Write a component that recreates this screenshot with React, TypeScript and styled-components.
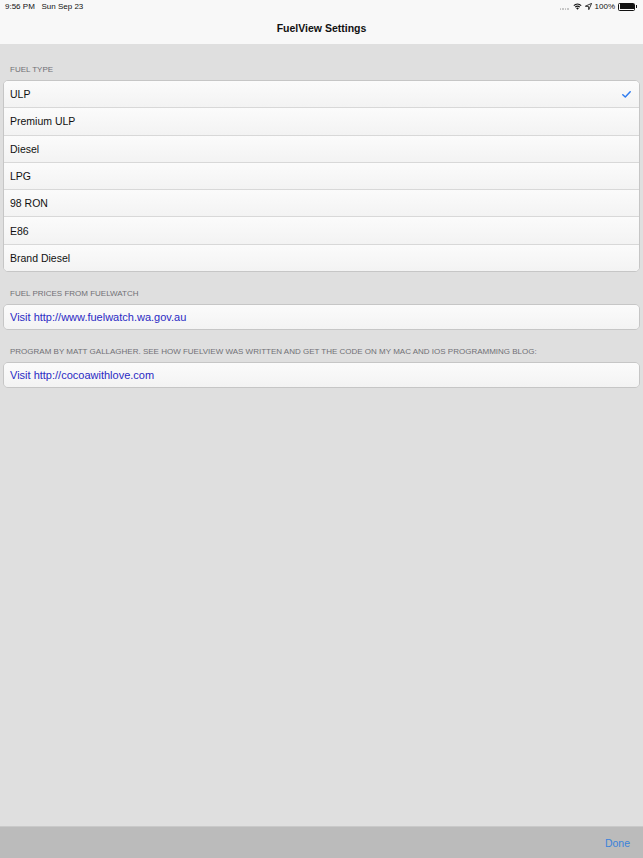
import React from "react";
import styled, { createGlobalStyle } from "styled-components";

const GlobalStyle = createGlobalStyle`
  html, body {
    margin: 0;
    padding: 0;
    background: #dfdfdf;
  }
  body {
    font-family: "Liberation Sans", Arial, sans-serif;
    -webkit-font-smoothing: antialiased;
  }
`;

const FUELS = ["ULP", "Premium ULP", "Diesel", "LPG", "98 RON", "E86", "Brand Diesel"];

const App: React.FC = () => {
  return (
    <>
      <GlobalStyle />
      <Screen>
        <Top>
          <StatusBar>
            <StatusText>9:56 PM&nbsp;&nbsp;&nbsp;Sun Sep 23</StatusText>
            <StatusRight>
              <Dots>
                {[0, 1, 2, 3].map((d) => (
                  <Dot key={d} />
                ))}
              </Dots>
              <svg width="9" height="7" viewBox="0 0 18 14">
                <path d="M9 13.5 L6.3 10.4 A4 4 0 0 1 11.7 10.4 Z" fill="#111" />
                <path d="M4.4 8.3 A7 7 0 0 1 13.6 8.3" stroke="#111" strokeWidth="2.2" fill="none" />
                <path d="M1.6 5.2 A11 11 0 0 1 16.4 5.2" stroke="#111" strokeWidth="2.2" fill="none" />
              </svg>
              <svg width="7" height="7" viewBox="0 0 10 10">
                <path d="M9.5 0.5 L0.5 4.6 L5 5 L5.4 9.5 Z" fill="none" stroke="#111" strokeWidth="1.2" strokeLinejoin="round" />
              </svg>
              <StatusText>100%</StatusText>
              <Battery>
                <BatteryFill />
              </Battery>
            </StatusRight>
          </StatusBar>
          <NavBar>
            <NavTitle>FuelView Settings</NavTitle>
          </NavBar>
        </Top>

        <Content>
          <SectionHeader $first>Fuel Type</SectionHeader>
          <Group>
            {FUELS.map((f, i) => (
              <Row key={f} $last={i === FUELS.length - 1}>
                <RowLabel>{f}</RowLabel>
                {i === 0 && (
                  <svg width="9" height="7" viewBox="0 0 9 7">
                    <path d="M0.8 3.8 L3.3 6 L8.2 0.8" stroke="#2f7cf0" strokeWidth="1.5" fill="none" strokeLinecap="round" strokeLinejoin="round" />
                  </svg>
                )}
              </Row>
            ))}
          </Group>

          <SectionHeader>Fuel prices from Fuelwatch</SectionHeader>
          <Group>
            <Row $last $single>
              <LinkLabel>Visit http://www.fuelwatch.wa.gov.au</LinkLabel>
            </Row>
          </Group>

          <SectionHeader>
            Program by Matt Gallagher. See how FuelView was written and get the code on my Mac and iOS programming blog:
          </SectionHeader>
          <Group>
            <Row $last $single>
              <LinkLabel>Visit http://cocoawithlove.com</LinkLabel>
            </Row>
          </Group>
        </Content>

        <Toolbar>
          <DoneButton>Done</DoneButton>
        </Toolbar>
      </Screen>
    </>
  );
};

export default App;

const Screen = styled.div`
  display: flex;
  flex-direction: column;
  height: 858px;
  width: 643px;
  background: #dfdfdf;
`;

const Top = styled.div`
  background: #f8f8f8;
  height: 44px;
  display: flex;
  flex-direction: column;
`;

const StatusBar = styled.div`
  height: 13px;
  display: flex;
  align-items: center;
  justify-content: space-between;
  padding: 0 6px 0 5px;
`;

const StatusText = styled.span`
  font-size: 8px;
  color: #111;
  white-space: pre;
`;

const StatusRight = styled.div`
  display: flex;
  align-items: center;
  gap: 3px;
`;

const Dots = styled.div`
  display: flex;
  gap: 1px;
  align-items: flex-end;
  height: 6px;
  margin-right: 1px;
`;

const Dot = styled.div`
  width: 1.5px;
  height: 1.5px;
  border-radius: 50%;
  background: #bdbdbd;
`;

const Battery = styled.div`
  position: relative;
  width: 14px;
  height: 5px;
  border: 1px solid #111;
  border-radius: 1.5px;
  padding: 0.5px;
  box-sizing: content-box;
  margin-right: 2px;
  &::after {
    content: "";
    position: absolute;
    right: -3px;
    top: 1.5px;
    width: 1.5px;
    height: 3px;
    background: #111;
  }
`;

const BatteryFill = styled.div`
  width: 100%;
  height: 100%;
  background: #111;
`;

const NavBar = styled.div`
  flex: 1;
  display: flex;
  align-items: center;
  justify-content: center;
  padding-bottom: 2px;
`;

const NavTitle = styled.div`
  font-size: 10.5px;
  font-weight: bold;
  color: #111;
`;

const Content = styled.div`
  flex: 1;
  padding: 0 3px;
`;

const SectionHeader = styled.div<{ $first?: boolean }>`
  text-transform: uppercase;
  font-size: 8px;
  color: #707075;
  padding: ${(p) => (p.$first ? "22px" : "18px")} 7px 6px;
  line-height: 8px;
`;

const Group = styled.div`
  background: #f9f9f9;
  border: 1px solid #c6c6c6;
  border-radius: 5px;
  overflow: hidden;
`;

const Row = styled.div<{ $last?: boolean; $single?: boolean }>`
  height: ${(p) => (p.$single ? "24px" : "26.3px")};
  display: flex;
  align-items: center;
  justify-content: space-between;
  padding: 0 8px 0 6px;
  background: linear-gradient(#fbfbfb, #f3f3f3);
  border-bottom: ${(p) => (p.$last ? "none" : "1px solid #d8d8d8")};
`;

const RowLabel = styled.span`
  font-size: 10.5px;
  color: #111;
`;

const LinkLabel = styled.span`
  font-size: 11px;
  color: #2a2ac4;
`;

const Toolbar = styled.div`
  height: 31px;
  background: #bbbbbb;
  border-top: 1px solid #c9c9c9;
  display: flex;
  align-items: center;
  justify-content: flex-end;
  padding: 0 13px 0 0;
`;

const DoneButton = styled.span`
  font-size: 10.5px;
  color: #3a82da;
  margin-top: 1px;
`;
